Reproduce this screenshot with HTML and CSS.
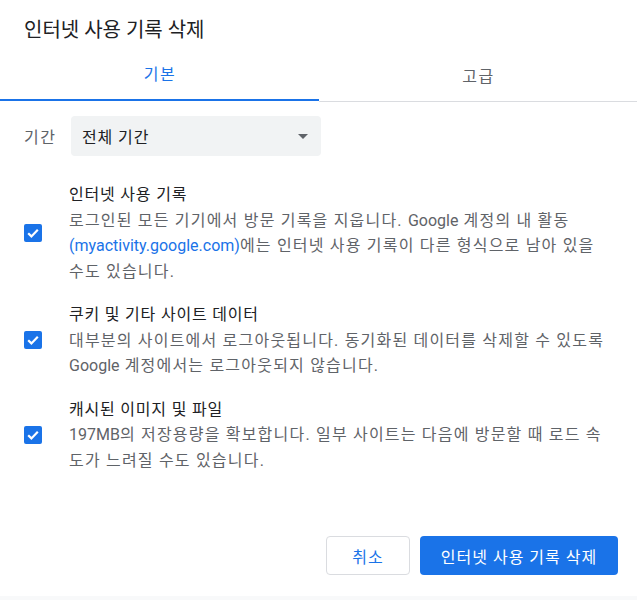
FILE: index.html
```html
<!DOCTYPE html>
<html lang="ko">
<head>
<meta charset="utf-8">
<link rel="stylesheet" href="styles.css">
</head>
<body>
<div class="dialog">
  <div class="title">인터넷 사용 기록 삭제</div>
  <div class="tabs">
    <div class="tab active">기본</div>
    <div class="tab">고급</div>
  </div>
  <div class="content">
    <div class="range">
      <span class="range-label">기간</span>
      <div class="select">
        <span>전체 기간</span>
        <span class="arrow"></span>
      </div>
    </div>
    <div class="item">
      <span class="checkbox"><svg viewBox="0 0 18 18" width="18" height="18"><path d="M4.2 9.2l3.2 3.2 6.4-6.6" fill="none" stroke="#fff" stroke-width="2.2"/></svg></span>
      <div class="item-text">
        <div class="item-title">인터넷 사용 기록</div>
        <div class="item-desc">로그인된 모든 기기에서 방문 기록을 지웁니다. <span class="en">Google</span> 계정의 내 활동<br><a class="link en">(myactivity.google.com)</a>에는 인터넷 사용 기록이 다른 형식으로 남아 있을<br>수도 있습니다.</div>
      </div>
    </div>
    <div class="item">
      <span class="checkbox"><svg viewBox="0 0 18 18" width="18" height="18"><path d="M4.2 9.2l3.2 3.2 6.4-6.6" fill="none" stroke="#fff" stroke-width="2.2"/></svg></span>
      <div class="item-text">
        <div class="item-title">쿠키 및 기타 사이트 데이터</div>
        <div class="item-desc">대부분의 사이트에서 로그아웃됩니다. 동기화된 데이터를 삭제할 수 있도록<br><span class="en">Google</span> 계정에서는 로그아웃되지 않습니다.</div>
      </div>
    </div>
    <div class="item">
      <span class="checkbox"><svg viewBox="0 0 18 18" width="18" height="18"><path d="M4.2 9.2l3.2 3.2 6.4-6.6" fill="none" stroke="#fff" stroke-width="2.2"/></svg></span>
      <div class="item-text">
        <div class="item-title">캐시된 이미지 및 파일</div>
        <div class="item-desc"><span class="en">197MB</span>의 저장용량을 확보합니다. 일부 사이트는 다음에 방문할 때 로드 속<br>도가 느려질 수도 있습니다.</div>
      </div>
    </div>
  </div>
  <div class="footer">
    <button class="btn btn-cancel">취소</button>
    <button class="btn btn-primary">인터넷 사용 기록 삭제</button>
  </div>
  <div class="strip"></div>
</div>
</body>
</html>
```
FILE: styles.css
```css
html, body {
  margin: 0;
  padding: 0;
  background: #fff;
}
body {
  font-family: Roboto, "Noto Sans CJK KR", sans-serif;
  color: #202124;
}
.dialog {
  width: 637px;
  height: 600px;
  display: flex;
  flex-direction: column;
  background: #fff;
}
.title {
  padding: 18px 24px 0;
  font-size: 20px;
  line-height: 24px;
  color: #202124;
}
.tabs {
  display: flex;
  align-items: flex-end;
  margin-top: 23px;
}
.tab {
  flex: 1;
  text-align: center;
  font-size: 16px;
  letter-spacing: 1.5px;
  text-indent: 1.5px;
  line-height: 20px;
  padding-bottom: 14px;
  color: #5f6368;
  border-bottom: 1px solid #dadce0;
}
.tab.active {
  color: #1a73e8;
  border-bottom: 2px solid #1a73e8;
  margin-bottom: 1px;
}
.content {
  padding: 14px 24px 0;
}
.range {
  display: flex;
  align-items: center;
}
.range-label {
  width: 47px;
  font-size: 16px;
  letter-spacing: 1.5px;
  color: #5f6368;
}
.select {
  width: 250px;
  height: 40px;
  box-sizing: border-box;
  background: #f1f3f4;
  border-radius: 4px;
  display: flex;
  align-items: center;
  justify-content: space-between;
  padding: 0 13px 0 11px;
  font-size: 16px;
  letter-spacing: 0.9px;
  color: #202124;
}
.arrow {
  width: 0;
  height: 0;
  border-left: 5px solid transparent;
  border-right: 5px solid transparent;
  border-top: 5px solid #5f6368;
}
.item {
  display: flex;
  align-items: center;
  margin-top: 18px;
}
.range + .item {
  margin-top: 26px;
}
.checkbox {
  width: 18px;
  height: 18px;
  border-radius: 2px;
  background: #1a73e8;
  flex: none;
  display: flex;
}
.item-text {
  margin-left: 27px;
  font-size: 16px;
  line-height: 25.5px;
  letter-spacing: 1.2px;
}
.item-title {
  color: #202124;
  letter-spacing: 0.8px;
}
.item-desc {
  color: #5f6368;
}
.en {
  letter-spacing: 0;
}
.link {
  color: #1a73e8;
  text-decoration: none;
}
.footer {
  margin-top: auto;
  display: flex;
  justify-content: flex-end;
  gap: 10px;
  padding: 0 19px 21px;
}
.btn {
  height: 39px;
  border-radius: 4px;
  font-family: inherit;
  font-size: 16px;
  letter-spacing: 1px;
  padding: 0;
  cursor: pointer;
}
.btn-cancel {
  width: 84px;
  background: #fff;
  border: 1px solid #dadce0;
  color: #1a73e8;
}
.btn-primary {
  width: 198px;
  background: #1a73e8;
  border: none;
  color: #fff;
}
.strip {
  height: 4px;
  background: #f8f9fa;
}
```
